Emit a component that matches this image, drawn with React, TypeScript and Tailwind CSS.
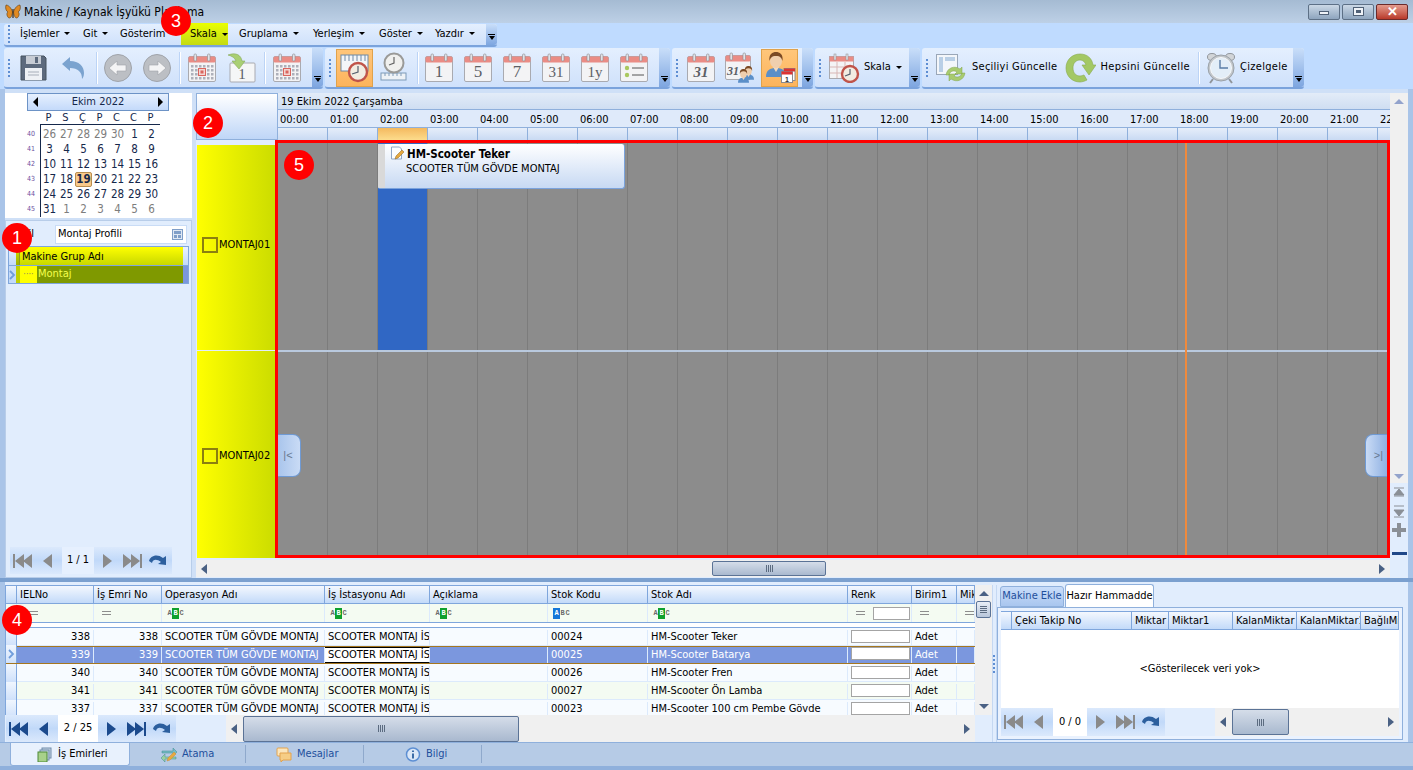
import type { ReactNode } from "react";

const hours = Array.from({ length: 23 }, (_, i) => String(i).padStart(2, "0") + ":00");

function Grip() {
  return (
    <div className="flex w-[3px] shrink-0 flex-col gap-[2px]">
      {[0, 1, 2, 3, 4].map((i) => (
        <div key={i} className="h-[2px] w-[2px] bg-[#5e8ed3]" />
      ))}
    </div>
  );
}

function Overflow() {
  return (
    <div className="flex h-full w-[11px] shrink-0 flex-col items-center justify-end rounded-r-[3px] bg-gradient-to-b from-[#c9def9] to-[#7ea6e0] pb-[5px]">
      <div className="mb-[1px] h-px w-[7px] bg-black" />
      <div className="h-0 w-0 border-x-[3.5px] border-t-[4px] border-x-transparent border-t-black" />
    </div>
  );
}

function Caret() {
  return <span className="ml-[5px] inline-block h-0 w-0 border-x-[3px] border-t-[3px] border-x-transparent border-t-black align-middle" />;
}

function Chevron() {
  return (
    <svg width="7" height="10" viewBox="0 0 7 10" className="shrink-0">
      <path d="M1 1l4 4-4 4" fill="none" stroke="#6f9ddb" strokeWidth="1.800" />
    </svg>
  );
}

function Sep({ className }: { className: string }) {
  return <div className={"h-[32px] w-[2px] shrink-0 bg-[#bcd4f6] border-r border-white " + className} />;
}

function CalShell() {
  return (
    <g>
      <rect x="0.5" y="3.5" width="27" height="25" rx="1.5" fill="#f3f3f5" stroke="#a9aab0" />
      <rect x="0.5" y="3.5" width="27" height="6" rx="1.5" fill="#ea8c85" />
      <rect x="6" y="1" width="2.5" height="7" rx="1" fill="#e2e2e6" stroke="#8a8a90" strokeWidth="0.6" />
      <rect x="19.5" y="1" width="2.5" height="7" rx="1" fill="#e2e2e6" stroke="#8a8a90" strokeWidth="0.6" />
    </g>
  );
}

function Cal({ label, className = "", italic }: { label: string; className?: string; italic?: boolean }) {
  return (
    <svg width="28" height="30" viewBox="0 0 28 30" className={"shrink-0 " + className}>
      <CalShell />
      <text x="14" y="24" textAnchor="middle" fontFamily="Liberation Serif, serif" fontStyle={italic ? "italic" : "normal"} fontWeight={italic ? 700 : 400} fontSize={label.length > 1 ? 15 : 17} fill="#5c5f66">
        {label}
      </text>
    </svg>
  );
}

function CalGrid({ className = "" }: { className?: string }) {
  return (
    <svg width="28" height="30" viewBox="0 0 28 30" className={"shrink-0 " + className}>
      <CalShell />
      {[3, 7, 11, 15, 19, 23].map((x) =>
        [12, 16, 20, 24].map((y) => <rect key={x + "-" + y} x={x} y={y} width="2.5" height="2.5" fill="#aeb0ba" />)
      )}
      <rect x="10.500" y="15.500" width="7" height="7" fill="#f3d4d0" stroke="#d9655f" />
      <rect x="12.500" y="17.500" width="3" height="3" fill="#d9655f" />
    </svg>
  );
}

function ClockFace({ cx, cy, r, rim = "#c0544a" }: { cx: number; cy: number; r: number; rim?: string }) {
  return (
    <g>
      <circle cx={cx} cy={cy} r={r} fill="#f2ece2" stroke={rim} strokeWidth="2.4" />
      <path d={`M${cx} ${cy - r + 3}V${cy}L${cx - r + 3} ${cy + 2}`} fill="none" stroke="#55606e" strokeWidth="1.2" />
    </g>
  );
}

function Ruler({ y = 20 }: { y?: number }) {
  return (
    <g>
      <rect x="1" y={y} width="25" height="7" fill="#eef2f6" stroke="#7d9ab8" />
      {[5, 9, 13, 17, 21].map((x) => (
        <path key={x} d={`M${x} ${y}v3`} stroke="#7d9ab8" />
      ))}
    </g>
  );
}

function Save() {
  return (
    <svg width="27" height="27" viewBox="0 0 27 27" className="shrink-0">
      <path d="M1 2h23l2 2v22H1z" fill="#5d6a7d" stroke="#47525f" />
      <rect x="6" y="2" width="15" height="8" fill="#c7ccd4" />
      <rect x="15" y="3" width="3" height="6" fill="#5d6a7d" />
      <rect x="5" y="14" width="17" height="12" fill="#eef1f5" />
      <path d="M8 18h11M8 21h11" stroke="#a7aeb9" />
    </svg>
  );
}

function Undo() {
  return (
    <svg width="24" height="22" viewBox="0 0 24 22" className="shrink-0">
      <path d="M1 7 9 0v4c9 0 14 5 14 12 0 3-1 5-2 6 0-7-4-11-12-11v3z" fill="#7ba3cf" />
    </svg>
  );
}

function Round({ dir, className = "" }: { dir: "l" | "r"; className?: string }) {
  return (
    <svg width="28" height="28" viewBox="0 0 28 28" className={"shrink-0 " + className}>
      <circle cx="14" cy="14" r="13.5" fill="#bcbfc4" stroke="#9fa3a9" />
      <path d={dir === "l" ? "M5 14l8-7v4h9v6h-9v4z" : "M23 14l-8-7v4H6v6h9v4z"} fill="#f4f4f5" stroke="#a0a3a8" strokeWidth="0.6" />
    </svg>
  );
}

function NextDay() {
  return (
    <svg width="29" height="31" viewBox="0 0 29 31" className="ml-[11px] shrink-0">
      <rect x="3" y="11" width="25" height="19" rx="1" fill="#f5f6f7" stroke="#a9aab0" />
      <text x="15" y="27" textAnchor="middle" fontFamily="Liberation Serif, serif" fontSize="15" fill="#5c5f66">1</text>
      <path d="M1 3c8-3 13 0 14 6h3l-6 8-7-8h4c-1-3-4-5-8-6z" fill="#a9cf74" stroke="#86a95b" strokeWidth="0.6" />
    </svg>
  );
}

function RulerClock({ active }: { active?: boolean }) {
  return (
    <svg width="29" height="31" viewBox="0 0 29 31" className="shrink-0">
      {active ? (
        <g>
          <rect x="1" y="3" width="27" height="16" fill="#f3f6f9" stroke="#6f89a6" />
          {[5, 9, 13, 17, 21, 25].map((x) => (
            <path key={x} d={`M${x} 3v6`} stroke="#6f89a6" />
          ))}
          <ClockFace cx={18} cy={20} r={9} />
        </g>
      ) : (
        <g>
          <Ruler y={21} />
          <circle cx="14" cy="11" r="9.5" fill="#f0f0ee" stroke="#9a9a98" strokeWidth="2" />
          <path d="M14 5v6l-5 2" fill="none" stroke="#666" strokeWidth="1.2" />
        </g>
      )}
    </svg>
  );
}

function ListCal() {
  return (
    <svg width="28" height="30" viewBox="0 0 28 30" className="ml-[11px] shrink-0">
      <CalShell />
      <circle cx="7" cy="15" r="2.2" fill="#a9c85f" />
      <circle cx="7" cy="22" r="2.2" fill="#a9c85f" />
      <path d="M12 15h12M12 22h12" stroke="#555" />
    </svg>
  );
}

function Person({ x = 0, y = 0, s = 1 }: { x?: number; y?: number; s?: number }) {
  return (
    <g transform={`translate(${x} ${y}) scale(${s})`}>
      <path d="M0 25c0-7 4-9 10-9s10 2 10 9z" fill="#5b8fc9" />
      <path d="M7 15l3 5 3-5z" fill="#f2d9c0" />
      <ellipse cx="10" cy="9" rx="6" ry="7" fill="#f0cfae" />
      <path d="M3.500 9c-1-7 3-9 6.500-9s7.500 2 6.500 9c-1-3-2-5-6.500-5S4.500 6 3.500 9z" fill="#7b4a25" />
    </g>
  );
}

function PersonCal() {
  return (
    <svg width="33" height="33" viewBox="0 0 33 33" className="shrink-0">
      <Person x={3} y={1} />
      <rect x="21" y="17.500" width="11" height="12" fill="#fff" stroke="#8a8a90" />
      <rect x="21" y="17.500" width="11" height="3" fill="#d33" />
      <rect x="18.500" y="20.500" width="11" height="11" fill="#fff" stroke="#8a8a90" />
      <rect x="18.500" y="20.500" width="11" height="3" fill="#d33" />
      <text x="24" y="30.500" textAnchor="middle" fontFamily="Liberation Sans, sans-serif" fontWeight="700" fontSize="7" fill="#333">1</text>
    </svg>
  );
}

function TeamCal() {
  return (
    <svg width="31" height="31" viewBox="0 0 31 31" className="ml-[10px] shrink-0">
      <rect x="0.5" y="3.5" width="25" height="24" rx="1.5" fill="#f3f3f5" stroke="#a9aab0" />
      <rect x="0.5" y="3.5" width="25" height="6" rx="1.5" fill="#ea8c85" />
      <rect x="5" y="1" width="2.5" height="7" rx="1" fill="#e2e2e6" stroke="#8a8a90" strokeWidth="0.6" />
      <rect x="18" y="1" width="2.5" height="7" rx="1" fill="#e2e2e6" stroke="#8a8a90" strokeWidth="0.6" />
      <text x="8" y="23" textAnchor="middle" fontFamily="Liberation Serif, serif" fontStyle="italic" fontWeight="700" fontSize="12" fill="#5c5f66">31</text>
      <Person x={18} y={14} s={0.55} />
      <Person x={13} y={17} s={0.55} />
    </svg>
  );
}

function ScaleIcon() {
  return (
    <svg width="31" height="30" viewBox="0 0 31 30" className="ml-[8px] shrink-0">
      <rect x="0.5" y="3.5" width="24" height="22" fill="#f4f4f5" stroke="#a9aab0" />
      <rect x="0.5" y="3.5" width="24" height="5" fill="#ea8c85" />
      <path d="M1 14h23M1 20h23M8 9v16M16 9v16" stroke="#d8b7b5" />
      <rect x="5" y="1" width="2" height="6" fill="#e2e2e6" stroke="#8a8a90" strokeWidth="0.5" />
      <rect x="17" y="1" width="2" height="6" fill="#e2e2e6" stroke="#8a8a90" strokeWidth="0.5" />
      <ClockFace cx={21} cy={21} r={8} />
    </svg>
  );
}

function UpdateSel() {
  return (
    <svg width="30" height="30" viewBox="0 0 30 30" className="ml-[7px] shrink-0">
      <rect x="0.5" y="1.500" width="21" height="20" fill="#f3f6fa" stroke="#9aa7b8" />
      <rect x="3" y="4" width="4" height="15" fill="#b9cfe6" />
      <rect x="9" y="4" width="10" height="4" fill="#b9cfe6" />
      <path d="M10 22c1-7 8-10 14-6l2-2v7h-7l2-2c-3-2-7-1-8 3zM29 20c-1 7-8 10-14 6l-2 2v-7h7l-2 2c3 2 7 1 8-3z" fill="#a8cb6f" stroke="#83a54f" strokeWidth="0.5" />
    </svg>
  );
}

function UpdateAll() {
  return (
    <svg width="31" height="30" viewBox="0 0 31 30" className="ml-[8px] shrink-0">
      <path d="M15 1c7 0 12 4 13 11h3l-7 10-7-10h4c-1-3-3-5-6-5-4 0-7 3-7 8s3 8 7 8c2 0 3-1 4-1l3 5c-2 1-5 2-7 2C7 29 1 23 1 15S7 1 15 1z" fill="#a3c864" stroke="#88a94e" strokeWidth="0.6" />
    </svg>
  );
}

function AlarmClock() {
  return (
    <svg width="28" height="32" viewBox="0 0 28 32" className="ml-[7px] shrink-0">
      <ellipse cx="5" cy="5" rx="4.500" ry="3.500" fill="#d2d5d8" stroke="#90959b" />
      <ellipse cx="23" cy="5" rx="4.500" ry="3.500" fill="#d2d5d8" stroke="#90959b" />
      <path d="M6 27l-3 4M22 27l3 4" stroke="#90959b" strokeWidth="2" />
      <circle cx="14" cy="16" r="13" fill="#c3c7cb" stroke="#9aa1a8" />
      <circle cx="14" cy="16" r="10.500" fill="#e3eef8" stroke="#f5f7f9" />
      <path d="M13 8v8h8" fill="none" stroke="#5b7da6" strokeWidth="1.400" />
    </svg>
  );
}

function Butterfly() {
  return (
    <svg width="16" height="16" viewBox="0 0 16 16" className="shrink-0">
      <path d="M7.500 8C6 3 3 1 1 1c-1 3 0 6 2 7-2 1-1 5 1 6 2 0 3-2 3.500-6z" fill="#e08a22" stroke="#5e3b12" strokeWidth="0.6" />
      <path d="M8.500 8C10 3 13 1 15 1c1 3 0 6-2 7 2 1 1 5-1 6-2 0-3-2-3.500-6z" fill="#e08a22" stroke="#5e3b12" strokeWidth="0.6" />
      <path d="M8 5v9" stroke="#3d2a12" strokeWidth="1.200" />
    </svg>
  );
}

function WinBtn({ children, className }: { children: ReactNode; className: string }) {
  return <div className={"flex h-[16px] w-[32px] items-center justify-center rounded-[2px] border " + className}>{children}</div>;
}

function ToolGroup({ width, children }: { width: string; children: ReactNode }) {
  return (
    <div className={"flex h-[41px] shrink-0 items-center rounded-[3px] border-b-2 border-[#7ba3dc] bg-gradient-to-b from-[#e4effe] to-[#cfe1fb] pl-[4px] " + width}>
      {children}
    </div>
  );
}

function NavIcon({ kind, color }: { kind: "first" | "prev" | "next" | "last"; color: string }) {
  if (kind === "prev" || kind === "next") {
    return (
      <svg width="9" height="14" viewBox="0 0 9 14" className="shrink-0">
        <path d={kind === "prev" ? "M9 0v14L0 7z" : "M0 0v14l9-7z"} fill={color} />
      </svg>
    );
  }
  return (
    <svg width="19" height="14" viewBox="0 0 19 14" className="shrink-0">
      {kind === "first" ? <path d="M0 0h2v14H0zM11 0v14L2 7zM19 0v14l-9-7z" fill={color} /> : <path d="M17 0h2v14h-2zM8 0v14l9-7zM0 0v14l9-7z" fill={color} />}
    </svg>
  );
}

function Nav({ label, box, color, white = "bg-white" }: { label: string; box: string; color: string; white?: string }) {
  return (
    <div className="flex h-full shrink-0 items-center bg-gradient-to-b from-[#dbe9fc] via-[#c1d9f9] to-[#dbe9fc] pl-[3px] pr-[4px]">
      <NavIcon kind="first" color={color} />
      <div className="ml-[11px]">
        <NavIcon kind="prev" color={color} />
      </div>
      <div className={"ml-[10px] flex h-full items-center justify-center text-black " + box + " " + white}>{label}</div>
      <div className="ml-[9px]">
        <NavIcon kind="next" color={color} />
      </div>
      <div className="ml-[11px]">
        <NavIcon kind="last" color={color} />
      </div>
      <svg width="19" height="14" viewBox="0 0 19 14" className="ml-[7px] shrink-0">
        <path d="M0 7C1 2 8-1 14 4l3-2v9l-8-1 3-2C8 5 4 5 3 9z" fill="#2c5f9e" />
      </svg>
    </div>
  );
}

function Thumb({ className }: { className: string }) {
  return (
    <div className={"flex shrink-0 items-center justify-center gap-px rounded-[2px] border border-[#5b7396] bg-gradient-to-b from-[#d5dde9] to-[#a9b9cf] " + className}>
      {[0, 1, 2, 3].map((i) => (
        <div key={i} className="h-[7px] w-px bg-[#5b6b80]" />
      ))}
    </div>
  );
}

function HScroll({ className, thumb }: { className: string; thumb: string }) {
  return (
    <div className={"flex items-center justify-between bg-[#f0f0f0] px-[5px] " + className}>
      <div className="h-0 w-0 border-y-[5px] border-r-[6px] border-y-transparent border-r-[#4a6184]" />
      <div className="flex min-w-0 flex-1 items-center">
        <Thumb className={thumb} />
      </div>
      <div className="h-0 w-0 border-y-[5px] border-l-[6px] border-y-transparent border-l-[#4a6184]" />
    </div>
  );
}

function Badge({ n, className }: { n: number; className: string }) {
  return (
    <div className={"absolute flex h-[30px] w-[30px] items-center justify-center rounded-full bg-[#ff0000] font-['Liberation_Sans',sans-serif] text-[18px] text-white " + className}>
      {n}
    </div>
  );
}

function Abc({ hi = "B" }: { hi?: "A" | "B" }) {
  return (
    <div className="ml-[2px] flex h-[11px] items-center font-['Liberation_Mono',monospace] text-[7px] font-bold leading-none text-[#6b6b6b]">
      {["A", "B", "C"].map((c) =>
        c === hi ? (
          <span key={c} className={"flex h-[11px] w-[7px] items-center justify-center text-white " + (hi === "A" ? "bg-[#1577d8]" : "bg-[#0fa02d]")}>
            {c}
          </span>
        ) : (
          <span key={c} className="w-[5px] text-center">
            {c}
          </span>
        )
      )}
    </div>
  );
}

function Eq() {
  return (
    <div className="flex flex-col gap-[2px]">
      <div className="h-px w-[9px] bg-[#8d8d8d]" />
      <div className="h-px w-[9px] bg-[#8d8d8d]" />
    </div>
  );
}

const month = [
  { w: 40, d: ["26", "27", "28", "29", "30", "1", "2"] },
  { w: 41, d: ["3", "4", "5", "6", "7", "8", "9"] },
  { w: 42, d: ["10", "11", "12", "13", "14", "15", "16"] },
  { w: 43, d: ["17", "18", "19", "20", "21", "22", "23"] },
  { w: 44, d: ["24", "25", "26", "27", "28", "29", "30"] },
  { w: 45, d: ["31", "1", "2", "3", "4", "5", "6"] },
];

function Calendar() {
  return (
    <div className="flex h-[125px] shrink-0 flex-col bg-white pl-[22px]">
      <div className="flex h-[18px] w-[142px] shrink-0 items-center justify-between border border-[#6d93c6] bg-gradient-to-b from-[#e6f0fe] to-[#c4dafa] px-[5px] text-[#15284b]">
        <div className="h-0 w-0 border-y-[5px] border-r-[5px] border-y-transparent border-r-black" />
        <span>Ekim 2022</span>
        <div className="h-0 w-0 border-y-[5px] border-l-[5px] border-y-transparent border-l-black" />
      </div>
      <div className="ml-[13px] flex h-[14px] w-[120px] items-center border-b border-[#15284b] pt-[1px] text-[#15284b]">
        {["P", "S", "Ç", "P", "C", "C", "P"].map((d, i) => (
          <span key={i} className="w-[17px] text-center">
            {d}
          </span>
        ))}
      </div>
      <div className="flex">
        <div className="w-[13px] pt-[2px] text-[7px] text-[#6c4fa0]">
          {month.map((r) => (
            <div key={r.w} className="flex h-[15px] items-center">
              {r.w}
            </div>
          ))}
        </div>
        <div className="border-l border-[#15284b] pt-[2px]">
          {month.map((r, ri) => (
            <div key={r.w} className="flex h-[15px] items-center">
              {r.d.map((d, i) => {
                const muted = (ri === 0 && i < 5) || (ri === 5 && i > 0);
                const today = d === "19";
                return (
                  <span key={i} className={"flex h-[15px] w-[17px] items-center justify-center text-[11.5px] " + (muted ? "text-[#7d7d7d] " : "text-[#15284b] ") + (today ? "rounded-[2px] border border-[#b98d4e] bg-[#f8c98a] font-bold" : "")}>
                    {d}
                  </span>
                );
              })}
            </div>
          ))}
        </div>
      </div>
    </div>
  );
}

const gridCols = [
  { t: "IELNo", w: "w-[77px]" },
  { t: "İş Emri No", w: "w-[68px]" },
  { t: "Operasyon Adı", w: "w-[163px]" },
  { t: "İş İstasyonu Adı", w: "w-[105px]" },
  { t: "Açıklama", w: "w-[118px]" },
  { t: "Stok Kodu", w: "w-[100px]" },
  { t: "Stok Adı", w: "w-[200px]" },
  { t: "Renk", w: "w-[64px]" },
  { t: "Birim1", w: "w-[45px]" },
  { t: "Mik", w: "w-[18px]" },
];

const rows = [
  { n: "338", code: "00024", name: "HM-Scooter Teker", bg: "bg-[#f7fbff]" },
  { n: "339", code: "00025", name: "HM-Scooter Batarya", bg: "bg-[#7b97de]", sel: true },
  { n: "340", code: "00026", name: "HM-Scooter Fren", bg: "bg-[#f7fbff]" },
  { n: "341", code: "00027", name: "HM-Scooter Ön Lamba", bg: "bg-[#f4fbf2]" },
  { n: "337", code: "00023", name: "HM-Scooter 100 cm Pembe Gövde", bg: "bg-[#f7fbff]" },
];

function Cell({ w, className = "", children }: { w: string; className?: string; children?: ReactNode }) {
  return <div className={"flex h-full shrink-0 items-center overflow-hidden whitespace-nowrap border-r border-[#dceafc] px-[3px] " + w + " " + className}>{children}</div>;
}

function HeadCell({ w, children }: { w: string; children?: ReactNode }) {
  return <div className={"flex h-full shrink-0 items-center overflow-hidden whitespace-nowrap border-r border-[#7fa6dc] bg-gradient-to-b from-[#f4f8fe] to-[#c3daf9] pl-[3px] pt-[2px] " + w}>{children}</div>;
}

function WorkGrid() {
  return (
    <div className="flex w-[987px] shrink-0 flex-col">
      <div className="flex h-[130px] overflow-hidden border-l border-[#7fa6dc]">
        <div className="w-[969px] shrink-0 overflow-hidden">
          <div className="flex h-[19px] border-y border-[#7fa6dc]">
            <HeadCell w="w-[11px]" />
            {gridCols.map((c) => (
              <HeadCell key={c.t} w={c.w}>
                {c.t}
              </HeadCell>
            ))}
          </div>
          <div className="flex h-[19px] border-b border-[#7fa6dc] bg-[#f4fbf2]">
            <Cell w="w-[11px]" />
            <Cell w="w-[77px]"><div className="ml-[9px]"><Eq /></div></Cell>
            <Cell w="w-[68px]"><div className="ml-[5px]"><Eq /></div></Cell>
            <Cell w="w-[163px]"><Abc /></Cell>
            <Cell w="w-[105px]"><Abc /></Cell>
            <Cell w="w-[118px]"><Abc /></Cell>
            <Cell w="w-[100px]"><Abc hi="A" /></Cell>
            <Cell w="w-[200px]"><Abc /></Cell>
            <Cell w="w-[64px]">
              <div className="ml-[5px] mr-[8px]"><Eq /></div>
              <div className="h-[13px] w-[37px] shrink-0 border border-[#a4a4a4] bg-white" />
            </Cell>
            <Cell w="w-[45px]"><div className="ml-[5px]"><Eq /></div></Cell>
            <Cell w="w-[18px]"><div className="ml-[5px]"><Eq /></div></Cell>
          </div>
          <div className="h-[5px] border-b border-[#7fa6dc] bg-white" />
          {rows.map((r) => (
            <div key={r.n} className={"flex h-[18px] border-b border-[#dceafc] " + r.bg + (r.sel ? " border-y border-y-[#a5761f] pt-0 text-white" : " pt-[2px]")}>
              <div className="-mt-[2px] flex h-[18px] w-[11px] shrink-0 items-center justify-center border-r border-[#7fa6dc] bg-gradient-to-b from-[#f0f6fe] to-[#cfe1fb]">{r.sel ? <Chevron /> : null}</div>
              <Cell w="w-[77px]" className="justify-end">{r.n}</Cell>
              <Cell w="w-[68px]" className="justify-end">{r.n}</Cell>
              <Cell w="w-[163px]">SCOOTER TÜM GÖVDE MONTAJ</Cell>
              <Cell w="w-[105px]" className={r.sel ? "border-y border-y-black bg-white text-black" : ""}>SCOOTER MONTAJ İSTASYONU</Cell>
              <Cell w="w-[118px]" />
              <Cell w="w-[100px]">{r.code}</Cell>
              <Cell w="w-[200px]">{r.name}</Cell>
              <Cell w="w-[64px]"><div className="mb-[3px] h-[13px] w-[59px] shrink-0 border border-[#a4a4a4] bg-white" /></Cell>
              <Cell w="w-[45px]">Adet</Cell>
              <Cell w="w-[18px]" />
            </div>
          ))}
        </div>
        <div className="flex w-[17px] shrink-0 flex-col items-center bg-[#f0f0f0] pt-[6px]">
          <div className="h-0 w-0 border-x-[5px] border-b-[5px] border-x-transparent border-b-[#4a6184]" />
          <div className="mt-[5px] flex h-[17px] w-[15px] flex-col items-center justify-center gap-px rounded-[2px] border border-[#5b7396] bg-gradient-to-b from-[#e8eef6] to-[#b8c6da]">
            {[0, 1, 2, 3].map((i) => (
              <div key={i} className="h-px w-[7px] bg-[#5b6b80]" />
            ))}
          </div>
          <div className="mt-auto mb-[6px] h-0 w-0 border-x-[5px] border-t-[5px] border-x-transparent border-t-[#4a6184]" />
        </div>
      </div>
      <div className="flex h-[27px] shrink-0 items-center bg-[#e1edfd] pl-px">
        <Nav label="2 / 25" box="w-[40px]" color="#1b4a8d" />
        <HScroll className="ml-[50px] h-full w-[749px]" thumb="ml-[6px] h-[26px] w-[276px]" />
      </div>
    </div>
  );
}

function HammaddePanel() {
  const cols = [
    { t: "Çeki Takip No", w: "w-[120px]" },
    { t: "Miktar", w: "w-[37px]" },
    { t: "Miktar1", w: "w-[64px]" },
    { t: "KalanMiktar", w: "w-[64px]" },
    { t: "KalanMiktar1", w: "w-[64px]" },
    { t: "BağlıMiktar", w: "w-[38px]" },
  ];
  return (
    <div className="flex w-[406px] shrink-0 flex-col">
      <div className="flex h-[22px] shrink-0 items-end pl-[3px]">
        <div className="flex h-[21px] w-[64px] items-center justify-center rounded-t-[3px] border border-[#8fb0dc] bg-gradient-to-b from-[#c9ddf9] to-[#a9c6ef] text-[#1e4f9c]">Makine Ekle</div>
        <div className="ml-px flex h-[23px] w-[89px] items-center justify-center rounded-t-[3px] border border-b-0 border-[#8fb0dc] bg-white">Hazır Hammadde</div>
      </div>
      <div className="flex h-[133px] w-[406px] flex-col border border-[#8fb0dc] bg-[#eaf2fe] p-[3px]">
        <div className="flex h-[19px] shrink-0 border-y border-[#7fa6dc]">
          <HeadCell w="w-[11px]" />
          {cols.map((c) => (
            <HeadCell key={c.t} w={c.w}>
              {c.t}
            </HeadCell>
          ))}
        </div>
        <div className="flex h-[78px] shrink-0 items-center justify-center bg-white">&lt;Gösterilecek veri yok&gt;</div>
        <div className="flex h-[28px] shrink-0 items-center bg-[#e1edfd]">
          <Nav label="0 / 0" box="w-[34px]" color="#8a8a8a" />
          <HScroll className="ml-[50px] h-full w-[184px]" thumb="ml-[6px] h-[26px] w-[57px]" />
        </div>
      </div>
    </div>
  );
}

function Gantt() {
  return (
    <div className="flex w-[1212px] shrink-0 flex-col bg-[#e1edfd]">
      <div className="flex h-[47px] shrink-0">
        <div className="w-[82px] shrink-0 border border-[#8fb0dc] bg-gradient-to-b from-white to-[#bfd6f7]" />
        <div className="flex w-[1112px] shrink-0 flex-col overflow-hidden">
          <div className="flex h-[17px] shrink-0 items-center border-b border-[#8fb0dc] bg-gradient-to-b from-[#e3ecf8] to-[#cfdef2] pl-[3px] pt-[2px]">19 Ekim 2022 Çarşamba</div>
          <div className="flex h-[18px] shrink-0 border-b border-[#8fb0dc] bg-[#dfeafa]">
            {hours.map((h) => (
              <div key={h} className="w-[50px] shrink-0 pl-[2px] pt-[3px] leading-[14px]">
                {h}
              </div>
            ))}
          </div>
          <div className="flex h-[12px] shrink-0 bg-gradient-to-b from-[#e6eefa] to-[#c9daf3]">
            {hours.map((h, i) => (
              <div key={h} className={"w-[50px] shrink-0 border-r border-[#8fb0dc] " + (i === 2 ? "bg-gradient-to-b from-[#f4b95f] to-[#fcdc8c]" : "")} />
            ))}
          </div>
        </div>
        <div className="flex w-[18px] shrink-0 justify-center bg-[#f0f0f0] pt-[6px]">
          <div className="h-0 w-0 border-x-[5px] border-b-[5px] border-x-transparent border-b-[#93a3cc]" />
        </div>
      </div>
      <div className="flex h-[418px] shrink-0">
        <div className="flex w-[79px] shrink-0 flex-col pl-px pt-[5px]">
          {[
            { t: "MONTAJ01", h: "h-[205px] pb-[5px]" },
            { t: "MONTAJ02", h: "mt-px flex-1 pt-[3px]" },
          ].map((r) => (
            <div key={r.t} className={"flex w-[79px] items-center bg-gradient-to-r from-[#ffff00] to-[#cbdc00] pl-[5px] " + r.h}>
              <div className="mr-[1px] h-[16px] w-[16px] shrink-0 border-2 border-[#8b7f10]" />
              <span className="whitespace-nowrap">{r.t}</span>
            </div>
          ))}
        </div>
        <div className="relative w-[1115px] shrink-0 overflow-hidden border-[3px] border-[#ff0000] bg-[#8c8c8c]">
          <div className="flex h-full">
            {hours.map((h) => (
              <div key={h} className="h-full w-[50px] shrink-0 border-r border-[#7c7c7c]" />
            ))}
          </div>
          <div className="absolute left-0 right-0 top-[207px] h-[2px] bg-[#b9c9de]" />
          <div className="absolute left-[100px] top-0 h-[207px] w-[49px] bg-[#3067c4]" />
          <div className="absolute bottom-0 left-[907px] top-0 w-[2px] bg-[#f08a3c]" />
          <div className="absolute left-[100px] top-px flex h-[45px] w-[247px] overflow-hidden rounded-r-[3px] rounded-bl-[2px] border-b border-r border-[#7ba3dc] bg-gradient-to-b from-white to-[#c7d9f3]">
            <div className="h-full w-[7px] shrink-0 bg-[#d9d9d9]" />
            <div className="flex flex-col pt-[2px]">
              <div className="flex items-center">
                <svg width="15" height="15" viewBox="0 0 15 15" className="ml-[5px] shrink-0">
                  <path d="M1.500 1h8l2 2v10h-10z" fill="#fbfdff" stroke="#8fa6c6" />
                  <path d="M5 13l1-3 6-6 2 2-6 6z" fill="#e7a93f" stroke="#8a6320" strokeWidth="0.5" />
                </svg>
                <span className="ml-[2px] text-[11.500px] font-bold leading-[14px]">HM-Scooter Teker</span>
              </div>
              <span className="ml-[21px] mt-px whitespace-nowrap leading-[14px]">SCOOTER TÜM GÖVDE MONTAJ</span>
            </div>
          </div>
          <div className="absolute left-0 top-[291px] flex h-[43px] w-[23px] items-center justify-center rounded-r-[8px] border border-l-0 border-[#6f9ad4] bg-gradient-to-r from-[#a9c5ec] to-[#c9dbf5] pr-[2px] font-['Liberation_Sans',sans-serif] text-[11px] text-[#66788f]">|&lt;</div>
          <div className="absolute right-0 top-[291px] flex h-[43px] w-[22px] items-center justify-center rounded-l-[8px] border border-r-0 border-[#6f9ad4] bg-gradient-to-r from-[#c9dbf5] to-[#8fb0e2] pl-[4px] font-['Liberation_Sans',sans-serif] text-[11px] text-[#66788f]">&gt;|</div>
        </div>
        <div className="flex w-[18px] shrink-0 flex-col items-center">
          <div className="flex h-[343px] w-full flex-col items-center justify-end bg-[#f0f0f0] pb-[4px]">
            <div className="h-0 w-0 border-x-[5px] border-t-[5px] border-x-transparent border-t-[#93a3cc]" />
          </div>
          <svg width="14" height="64" viewBox="0 0 14 64" className="mt-[4px]">
            <path d="M2 1h10M7 2 2 8h10zM2 9h10" stroke="#8a8f96" fill="#8a8f96" />
            <path d="M2 15h10M7 25l-5-6h10zM2 26h10" stroke="#8a8f96" fill="#8a8f96" transform="translate(0 4)" />
            <path d="M5 36h4v5h5v4H9v5H5v-5H-1v-4h6z" fill="#8a8f96" />
          </svg>
          <div className="mt-[1px] h-[3px] w-[15px] bg-[#1f4788]" />
        </div>
      </div>
      <HScroll className="mt-[2px] h-[17px] w-[1194px]" thumb="ml-[505px] h-[15px] w-[114px]" />
    </div>
  );
}

const bottomTabs = [
  { t: "Atama", w: "w-[116px] pl-[31px]", c: "#c98e3a" },
  { t: "Mesajlar", w: "w-[118px] pl-[30px]", c: "#e3a34f" },
  { t: "Bilgi", w: "w-[118px] pl-[41px]", c: "#5d8fd3" },
];

export default function App() {
  return (
    <div className="relative flex h-[770px] w-[1413px] flex-col overflow-hidden bg-[#bfdbff] font-['DejaVu_Sans_Condensed','DejaVu_Sans',sans-serif] text-[11px] text-black [font-stretch:condensed]">
      <div className="flex h-[23px] shrink-0 items-center bg-gradient-to-b from-[#a5bbd3] to-[#bdd0e6] pl-[5px]">
        <Butterfly />
        <span className="ml-[3px] text-[12px]">Makine / Kaynak İşyükü Planlama</span>
        <div className="ml-auto mr-[5px] flex gap-[2px]">
          <WinBtn className="border-[#5d7086] bg-gradient-to-b from-[#cbd8e6] to-[#8ea5be]"><div className="mt-[3px] h-[4px] w-[10px] border border-[#4f6076] bg-[#eef2f7]" /></WinBtn>
          <WinBtn className="border-[#5d7086] bg-gradient-to-b from-[#cbd8e6] to-[#8ea5be]">
            <div className="flex h-[9px] w-[11px] items-center justify-center border border-[#4f6076] bg-[#eef2f7]"><div className="h-[3px] w-[5px] bg-[#4f6076]" /></div>
          </WinBtn>
          <WinBtn className="border-[#6b2a2a] bg-gradient-to-b from-[#e39a8d] to-[#b8382a]"><span className="font-['Liberation_Sans',sans-serif] text-[13px] font-bold leading-none text-white">✕</span></WinBtn>
        </div>
      </div>

      <div className="flex h-[24px] shrink-0 items-center pl-[4px]">
        <div className="flex h-[23px] w-[493px] items-center rounded-[3px] border-b-2 border-[#7ba3dc] bg-gradient-to-b from-[#e4effe] to-[#cfe1fb] pl-[4px]">
          <Grip />
          <div className="ml-[9px] w-[63px]">İşlemler<Caret /></div>
          <div className="w-[37px]">Git<Caret /></div>
          <div className="w-[61px]">Gösterim</div>
          <div className="flex h-[22px] w-[47px] items-center bg-gradient-to-b from-[#eaff00] to-[#c4db14] pl-[9px]">Skala<Caret /></div>
          <div className="ml-[11px] w-[74px]">Gruplama<Caret /></div>
          <div className="w-[66px]">Yerleşim<Caret /></div>
          <div className="w-[56px]">Göster<Caret /></div>
          <div className="w-[51px]">Yazdır<Caret /></div>
          <Overflow />
        </div>
      </div>

      <div className="flex h-[42px] shrink-0 items-start gap-[2px] pl-[4px] pt-px">
        <ToolGroup width="w-[319px]">
          <Grip />
          <div className="ml-[9px]"><Save /></div>
          <div className="ml-[14px]"><Undo /></div>
          <Sep className="ml-[11px]" />
          <Round dir="l" className="ml-[6px]" />
          <Round dir="r" className="ml-[11px]" />
          <Sep className="ml-[8px]" />
          <CalGrid className="ml-[7px]" />
          <NextDay />
          <Sep className="ml-[8px]" />
          <CalGrid className="ml-[7px]" />
          <div className="ml-auto h-full"><Overflow /></div>
        </ToolGroup>
        <ToolGroup width="w-[345px]">
          <Grip />
          <div className="ml-[4px] flex h-[38px] w-[37px] items-center justify-center border border-[#e0a24b] bg-gradient-to-b from-[#ffc67a] to-[#fdb45c]"><RulerClock active /></div>
          <div className="ml-[7px]"><RulerClock /></div>
          <Sep className="ml-[8px]" />
          <Cal label="1" className="ml-[6px]" />
          <Cal label="5" className="ml-[11px]" />
          <Cal label="7" className="ml-[11px]" />
          <Cal label="31" className="ml-[11px]" />
          <Cal label="1y" className="ml-[11px]" />
          <ListCal />
          <div className="ml-auto h-full"><Overflow /></div>
        </ToolGroup>
        <ToolGroup width="w-[141px]">
          <Grip />
          <Cal label="31" italic className="ml-[8px]" />
          <TeamCal />
          <div className="ml-[5px] flex h-[38px] w-[37px] items-center justify-center border border-[#e0a24b] bg-gradient-to-b from-[#ffc67a] to-[#fdb45c]"><PersonCal /></div>
          <div className="ml-auto h-full"><Overflow /></div>
        </ToolGroup>
        <ToolGroup width="w-[105px]">
          <Grip />
          <div className="-ml-px"><ScaleIcon /></div>
          <span className="ml-[4px]">Skala<Caret /></span>
          <div className="ml-auto h-full"><Overflow /></div>
        </ToolGroup>
        <ToolGroup width="w-[382px]">
          <Grip />
          <UpdateSel />
          <span className="ml-[6px] whitespace-nowrap tracking-[0.25px]">Seçiliyi Güncelle</span>
          <UpdateAll />
          <span className="ml-[4px] whitespace-nowrap tracking-[0.4px]">Hepsini Güncelle</span>
          <Sep className="ml-[8px]" />
          <AlarmClock />
          <span className="ml-[5px] tracking-[0.3px]">Çizelgele</span>
          <div className="ml-auto h-full"><Overflow /></div>
        </ToolGroup>
      </div>

      <div className="flex h-[489px] shrink-0 gap-[4px] border-x-[5px] border-[#a9c4e8] bg-[#cfe0f7] pt-[4px]">
        <div className="flex w-[187px] shrink-0 flex-col">
          <Calendar />
          <div className="mt-[2px] flex flex-1 flex-col border border-[#b8cde9] bg-[#e1edfd] pl-[2px] pr-[2px] pt-[3px]">
            <div className="flex h-[20px] shrink-0 items-center pl-px">
              <span className="w-[25px] whitespace-nowrap text-right">Profil</span>
              <div className="ml-[21px] flex h-[19px] w-[132px] items-center justify-between border border-[#c9dcf6] bg-white pl-[2px] pr-[3px]">
                Montaj Profili
                <div className="grid h-[11px] w-[11px] grid-cols-2 gap-px border border-[#7f9ec8] bg-[#dfe8f4] p-px">
                  <div className="col-span-2 bg-[#7f9ec8]" />
                  <div className="bg-[#7f9ec8]" />
                  <div className="bg-[#7f9ec8]" />
                </div>
              </div>
            </div>
            <div className="mt-[2px] h-[38px] w-[181px] shrink-0 border border-[#7fa6dc]">
              <div className="flex h-[19px] border-b border-[#7fa6dc]">
                <div className="w-[7px] shrink-0 bg-gradient-to-b from-[#eaf2fe] to-[#c3daf9]" />
                <div className="w-[4px] shrink-0 border-r border-[#8d9a1f] bg-gradient-to-b from-[#d8e400] to-[#9db000]" />
                <div className="flex flex-1 items-center bg-gradient-to-b from-[#ffff00] to-[#c8d800] pl-[2px] pt-[2px]">Makine Grup Adı</div>
                <div className="w-[5px] shrink-0 bg-gradient-to-b from-[#eaf2fe] to-[#c3daf9]" />
              </div>
              <div className="flex h-[17px]">
                <div className="flex w-[7px] shrink-0 items-center justify-center bg-[#c3daf9]"><Chevron /></div>
                <div className="w-[4px] shrink-0 bg-[#c0d000]" />
                <div className="flex flex-1 items-center bg-[#7f9900] text-[#f4ff4d]">
                  <div className="flex h-full w-[17px] items-center justify-center bg-[#ffff00] text-[9px] text-[#8b8b60]">····</div>
                  <span className="ml-px">Montaj</span>
                </div>
                <div className="w-[5px] shrink-0 bg-[#7b97de]" />
              </div>
            </div>
            <div className="mt-auto mb-[3px] ml-[2px] h-[27px] w-[162px]">
              <Nav label="1 / 1" box="w-[34px]" color="#8a8a8a" white="bg-[#e6f0fe]" />
            </div>
          </div>
        </div>
        <Gantt />
      </div>

      <div className="h-[4px] shrink-0 bg-[#7ba0cf]" />

      <div className="flex h-[160px] shrink-0 border-x-[5px] border-[#a9c4e8] bg-[#e1edfd] pt-[3px]">
        <WorkGrid />
        <div className="flex w-[5px] shrink-0 items-center justify-center border-x border-[#c5d8f2]"><Grip /></div>
        <HammaddePanel />
      </div>

      <div className="flex h-[24px] shrink-0 items-end border-t border-[#8fb0dc] bg-[#b6cbe6] pl-[10px] text-[#1e4f9c]">
        <div className="flex h-[23px] w-[120px] items-center rounded-b-[3px] border border-t-0 border-[#8fb0dc] bg-[#e8f1fd] pl-[26px] pt-px text-black">
          <svg width="15" height="15" viewBox="0 0 15 15" className="mr-[6px] shrink-0">
            <rect x="5" y="1" width="9" height="10" fill="#c6d4e4" stroke="#6f8caa" />
            <rect x="3" y="3" width="9" height="10" fill="#c6d4e4" stroke="#6f8caa" />
            <rect x="1" y="5" width="9" height="10" fill="#a8d18a" stroke="#4d8a37" />
          </svg>
          İş Emirleri
        </div>
        {bottomTabs.map((t) => (
          <div key={t.t} className={"mb-[3px] flex h-[18px] items-center border-r border-[#8fa9cc] pt-px " + t.w}>
            <svg width="16" height="15" viewBox="0 0 16 15" className="mr-[5px] shrink-0">
              {t.t === "Bilgi" ? (
                <g>
                  <circle cx="8" cy="7.500" r="6.500" fill="#dbe7f7" stroke={t.c} strokeWidth="1.500" />
                  <path d="M8 3.500v1.500M8 6.500v5" stroke="#2c5f9e" strokeWidth="1.800" />
                </g>
              ) : t.t === "Mesajlar" ? (
                <g>
                  <rect x="1" y="1" width="11" height="8" rx="1" fill="#fbe6bd" stroke={t.c} />
                  <path d="M4 6h11v7H7l-2 2v-2H4z" fill="#f6cd85" stroke={t.c} />
                </g>
              ) : (
                <g>
                  <path d="M1 4h11V1l4 4-4 4V6H1z" fill="#77bcc3" stroke="#3d8a92" strokeWidth="0.5" />
                  <path d="M15 10H4V7l-4 4 4 4v-3h11z" fill="#9cd0a0" stroke="#3d8a92" strokeWidth="0.5" />
                  <path d="M6 14l1-3 6-6 2 2-6 6z" fill="#e7a93f" stroke={t.c} strokeWidth="0.5" />
                </g>
              )}
            </svg>
            {t.t}
          </div>
        ))}
      </div>
      <div className="h-[4px] shrink-0 bg-[#8fb0dc]" />

      <Badge n={1} className="left-[2px] top-[223px]" />
      <Badge n={2} className="left-[193px] top-[108px]" />
      <Badge n={3} className="left-[161px] top-[6px]" />
      <Badge n={4} className="left-[2px] top-[605px]" />
      <Badge n={5} className="left-[284px] top-[150px]" />
    </div>
  );
}
